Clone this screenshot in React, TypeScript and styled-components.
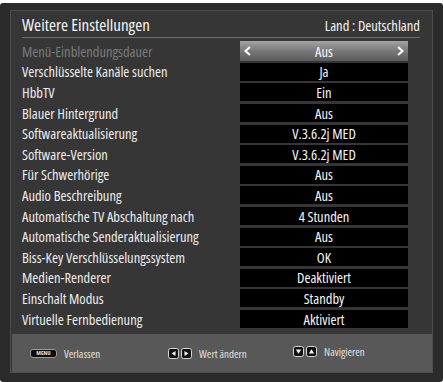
import React from 'react';
import styled, {createGlobalStyle} from 'styled-components';

const FONT = `"Open Sans", "Liberation Sans", sans-serif`;

const GlobalStyle = createGlobalStyle`
  html, body {
    margin: 0;
    padding: 0;
    background: #ffffff;
  }
  body {
    font-family: ${FONT};
    font-stretch: 75%;
  }
`

interface ISetting {
    label: string
    value: string
}

const settings: ISetting[] = [
    {label: 'Menü-Einblendungsdauer', value: 'Aus'},
    {label: 'Verschlüsselte Kanäle suchen', value: 'Ja'},
    {label: 'HbbTV', value: 'Ein'},
    {label: 'Blauer Hintergrund', value: 'Aus'},
    {label: 'Softwareaktualisierung', value: 'V.3.6.2j MED'},
    {label: 'Software-Version', value: 'V.3.6.2j MED'},
    {label: 'Für Schwerhörige', value: 'Aus'},
    {label: 'Audio Beschreibung', value: 'Aus'},
    {label: 'Automatische TV Abschaltung nach', value: '4 Stunden'},
    {label: 'Automatische Senderaktualisierung', value: 'Aus'},
    {label: 'Biss-Key Verschlüsselungssystem', value: 'OK'},
    {label: 'Medien-Renderer', value: 'Deaktiviert'},
    {label: 'Einschalt Modus', value: 'Standby'},
    {label: 'Virtuelle Fernbedienung', value: 'Aktiviert'},
]

const KeyArrow = ({dir}: { dir: 'left' | 'right' | 'up' | 'down' }) => {
    const points = {
        left: '7.5,3 3.5,5.5 7.5,8',
        right: '3.5,3 7.5,5.5 3.5,8',
        up: '2.8,7.5 5.5,3.2 8.2,7.5',
        down: '2.8,3.5 5.5,7.8 8.2,3.5',
    }[dir]
    return (
        <svg width="11" height="11" viewBox="0 0 11 11">
            <rect x="0.5" y="0.5" width="10" height="10" rx="2" fill="#111" stroke="#d8d8d8"/>
            <polygon points={points} fill="#f2f2f2"/>
        </svg>
    )
}

const Chevron = ({side}: { side: 'left' | 'right' }) => (
    <ChevronBox side={side}>
        <svg width="7" height="10" viewBox="0 0 7 10">
            <polyline points={side === 'left' ? '6,1 1.5,5 6,9' : '1,1 5.5,5 1,9'}
                      fill="none" stroke="#ffffff" strokeWidth="2"/>
        </svg>
    </ChevronBox>
)

const App = () => {
    return (
        <>
            <GlobalStyle/>
            <Screen>
                <Panel>
                    <Header>
                        <Title>Weitere Einstellungen</Title>
                        <Country>Land : Deutschland</Country>
                    </Header>
                    <List>
                        {settings.map((s, i) => (
                            <Row key={s.label}>
                                <Label dimmed={i === 0}>{s.label}</Label>
                                <Value selected={i === 0}>
                                    {i === 0 && <Chevron side="left"/>}
                                    {s.value}
                                    {i === 0 && <Chevron side="right"/>}
                                </Value>
                            </Row>
                        ))}
                    </List>
                    <Footer>
                        <Hint>
                            <MenuKey>MENU</MenuKey>
                            <HintText>Verlassen</HintText>
                        </Hint>
                        <Hint>
                            <KeyPair>
                                <KeyArrow dir="left"/>
                                <KeyArrow dir="right"/>
                            </KeyPair>
                            <HintText>Wert ändern</HintText>
                        </Hint>
                        <Hint raised>
                            <KeyPair>
                                <KeyArrow dir="down"/>
                                <KeyArrow dir="up"/>
                            </KeyPair>
                            <HintText>Navigieren</HintText>
                        </Hint>
                    </Footer>
                </Panel>
            </Screen>
        </>
    );
};

export default App;

const Screen = styled.div`
  margin-top: 3px;
  width: 443px;
  height: 379px;
  box-sizing: border-box;
  padding: 7px 10px 6px 10px;
  background: #2b2b2b;
  border-radius: 3px;
`
const Panel = styled.div`
  width: 423px;
  height: 363px;
  box-sizing: border-box;
  border: 1px solid #4d4d4d;
  background: #363636;
  display: flex;
  flex-direction: column;
`
const Header = styled.div`
  display: flex;
  align-items: flex-end;
  justify-content: space-between;
  height: 27px;
  box-sizing: border-box;
  margin: 0 12px 0 11px;
  padding-bottom: 3px;
  border-bottom: 1px solid #6e6e6e;
`
const Title = styled.span`
  font-size: 17px;
  color: #f4f4f4;
  line-height: 19px;
`
const Country = styled.span`
  font-size: 14.5px;
  color: #f4f4f4;
  line-height: 17px;
`
const List = styled.div`
  display: flex;
  flex-direction: column;
  padding: 3px 24px 0 11px;
`
const Row = styled.div`
  display: flex;
  align-items: center;
  height: 20.6px;
`
const Label = styled.span<{ dimmed?: boolean }>`
  flex: 1;
  font-size: 14.5px;
  color: ${props => props.dimmed ? '#7a7a7a' : '#ececec'};
  white-space: nowrap;
`
const Value = styled.div<{ selected?: boolean }>`
  position: relative;
  width: 168px;
  height: ${props => props.selected ? '20px' : '18px'};
  display: flex;
  align-items: center;
  justify-content: center;
  font-size: 14.5px;
  color: #f6f6f6;
  background: ${props => props.selected
          ? 'linear-gradient(to bottom, #a4a4a4 0%, #7c7c7c 45%, #5a5a5a 100%)'
          : '#000000'};
`
const ChevronBox = styled.span<{ side: 'left' | 'right' }>`
  position: absolute;
  top: 5px;
  ${props => props.side === 'left' ? 'left: 4px;' : 'right: 4px;'}
  display: flex;
`
const Footer = styled.div`
  margin-top: auto;
  height: 38px;
  margin-left: 1px;
  background: #585858;
  display: grid;
  grid-template-columns: 138px 125px auto;
  align-items: center;
  padding-left: 18px;
`
const Hint = styled.div<{ raised?: boolean }>`
  display: flex;
  align-items: center;
  gap: 7px;
  margin-top: ${props => props.raised ? '-3px' : '0'};
`
const MenuKey = styled.span`
  width: 27px;
  height: 9px;
  border-radius: 3px;
  background: #0c0c0c;
  border: 1px solid #9a9a9a;
  box-sizing: border-box;
  color: #e0e0e0;
  font-size: 6px;
  line-height: 7px;
  text-align: center;
  font-weight: bold;
`
const KeyPair = styled.span`
  display: flex;
  gap: 2px;
`
const HintText = styled.span`
  font-size: 11px;
  color: #e2e2e2;
`
